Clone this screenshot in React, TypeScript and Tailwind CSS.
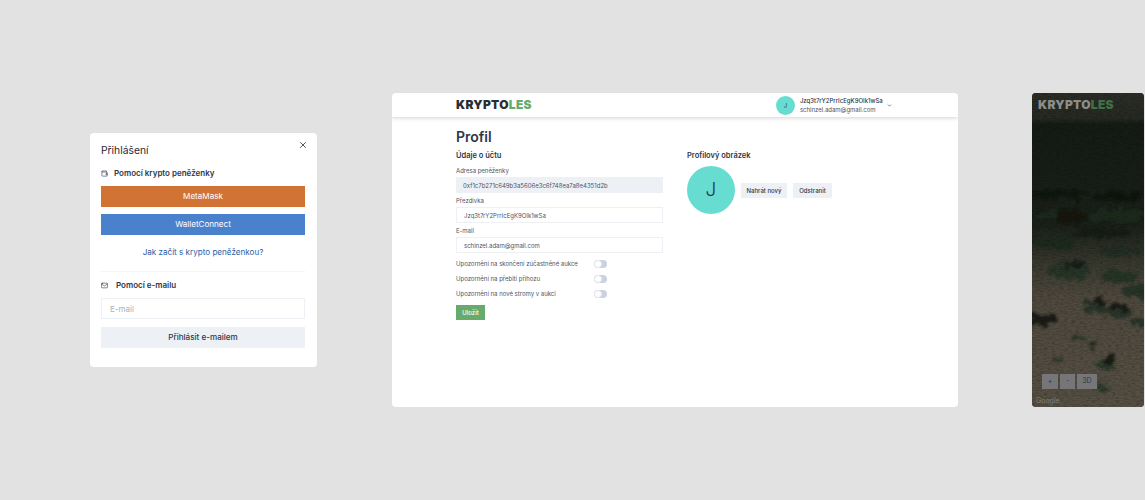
import React from 'react';
import { X, Mail, Wallet, ChevronDown } from 'lucide-react';

const font = { fontFamily: 'Inter, sans-serif' };

const Logo = ({ dark }: { dark?: boolean }) => (
  <div className={`text-[12px] leading-none font-black tracking-[0.025em] ${dark ? 'text-[#8b8d8b]' : 'text-[#2b2e30]'}`}>
    KRYPTO<span className={dark ? 'text-[#3f7048]' : 'text-[#66ab6b]'}>LES</span>
  </div>
);

const LoginCard = () => (
  <div className="relative mt-[133px] h-[234px] w-[227px] shrink-0 rounded bg-white px-[11px] pt-[10px]">
    <X className="absolute right-[9px] top-[7px] h-[10px] w-[10px] text-[#2d3748]" strokeWidth={2} />
    <div className="text-[10.3px] leading-[14px] text-[#1f2937]">Přihlášení</div>
    <div className="mt-[11px] flex items-center gap-[6px] text-[8px] leading-[11px] font-semibold text-[#2d3748]">
      <Wallet className="h-[7px] w-[7px]" strokeWidth={2} />
      Pomocí krypto peněženky
    </div>
    <button className="mt-[7px] block h-[21px] w-[204px] bg-[#d07335] text-[8.1px] text-white">MetaMask</button>
    <button className="mt-[7px] block h-[21px] w-[204px] bg-[#4a81cd] text-[8.1px] text-white">WalletConnect</button>
    <div className="mt-[12px] w-[204px] text-center text-[8.1px] leading-[11px] text-[#2b5ea7]">Jak začít s krypto peněženkou?</div>
    <div className="mt-[13px] h-px w-[204px] bg-[#f3f4f6]" />
    <div className="mt-[8px] flex items-center gap-[8px] text-[8px] leading-[11px] font-semibold text-[#2d3748]">
      <Mail className="h-[7px] w-[7px]" strokeWidth={2} />
      Pomocí e-mailu
    </div>
    <div className="mt-[7px] flex h-[21px] w-[204px] items-center border border-[#edf0f5] px-[8px] text-[8px] text-[#a9b2c0]">E-mail</div>
    <button className="mt-[8px] block h-[21px] w-[204px] bg-[#edf1f6] text-[8.1px] font-medium text-[#2d3748]">Přihlásit e-mailem</button>
  </div>
);

const Field = ({ label, value, filled }: { label: string; value: string; filled?: boolean }) => (
  <div>
    <div className="text-[6px] leading-[9px] text-[#4a5568]">{label}</div>
    <div className={`mt-[2px] flex h-[16px] w-[207px] items-center px-[7px] text-[6px] text-[#4a5568] ${filled ? 'bg-[#edf1f6]' : 'border border-[#edf0f5] bg-white'}`}>{value}</div>
  </div>
);

const Toggle = ({ label }: { label: string }) => (
  <div className="flex h-[15px] w-[207px] items-center text-[6px] text-[#4a5568]">
    <span className="w-[138px]">{label}</span>
    <span className="flex h-[8px] w-[13px] items-center rounded-full bg-[#cbd2de]">
      <span className="h-[8px] w-[8px] rounded-full border border-[#e5e8ee] bg-white" />
    </span>
  </div>
);

const ProfileCard = () => (
  <div className="ml-[75px] mt-[93px] h-[314px] w-[566px] shrink-0 overflow-hidden rounded bg-white">
    <div className="flex h-[24px] items-center pl-[64px] shadow-[0_1px_4px_rgba(0,0,0,0.18)]">
      <Logo />
      <div className="ml-[244px] flex items-center">
        <div className="flex h-[19px] w-[19px] items-center justify-center rounded-full bg-[#66ddd0] text-[6px] text-[#2d3748]">J</div>
        <div className="ml-[5px] w-[86px]">
          <div className="text-[6px] leading-[9px] font-medium text-[#2d3748]">Jzq3t7rY2PrrIcEgK9OIk1wSa</div>
          <div className="text-[6px] leading-[9px] text-[#4a5568]">schinzel.adam@gmail.com</div>
        </div>
        <ChevronDown className="ml-[1px] h-[5px] w-[5px] text-[#2d3748]" strokeWidth={3} />
      </div>
    </div>
    <div className="flex pl-[64px]">
      <div className="w-[231px] shrink-0">
        <h1 className="mt-[11px] text-[14px] leading-[18px] font-semibold text-[#2d3748]">Profil</h1>
        <div className="mt-[5px] text-[7.5px] leading-[10px] font-semibold text-[#2d3748]">Údaje o účtu</div>
        <div className="mt-[5px] flex flex-col gap-[3px]">
          <Field filled label="Adresa peněženky" value="0xf1c7b271c649b3a5606e3c6f748ea7a8e4351d2b" />
          <Field label="Přezdívka" value="Jzq3t7rY2PrrIcEgK9OIk1wSa" />
          <Field label="E-mail" value="schinzel.adam@gmail.com" />
        </div>
        <div className="mt-[3px]">
          <Toggle label="Upozornění na skončení zúčastněné aukce" />
          <Toggle label="Upozornění na přebití příhozu" />
          <Toggle label="Upozornění na nové stromy v aukci" />
        </div>
        <button className="mt-[4px] block h-[15px] w-[29px] bg-[#66ab6b] text-[6px] font-medium text-white">Uložit</button>
      </div>
      <div className="pt-[34px]">
        <div className="text-[7.5px] leading-[10px] font-semibold text-[#2d3748]">Profilový obrázek</div>
        <div className="mt-[5px] flex items-center">
          <div className="flex h-[48px] w-[48px] items-center justify-center rounded-full bg-[#66ddd0] text-[19px] font-light text-[#2d3748]">J</div>
          <button className="ml-[6px] h-[15px] w-[46px] bg-[#edf1f6] text-[6px] font-medium text-[#2d3748]">Nahrát nový</button>
          <button className="ml-[6px] h-[15px] w-[39px] bg-[#edf1f6] text-[6px] font-medium text-[#2d3748]">Odstranit</button>
        </div>
      </div>
    </div>
  </div>
);

// tree clumps on the satellite photo: x, y, rx, ry, colour
const clumps: [number, number, number, number, string][] = [
  [85, 122, 28, 6, '#1f2a1f'],
  [20, 122, 18, 4, '#1f2a1f'],
  [20, 150, 22, 6, '#1f2a1f'],
  [90, 158, 22, 5, '#222d21'],
  [28, 101, 28, 5, '#0e120e'],
  [88, 103, 26, 5, '#0e120e'],
  [38, 124, 14, 8, '#121510'],
  [70, 140, 30, 4, '#141a13'],
  [38, 178, 21, 8, '#283428'],
  [42, 171, 12, 3, '#171c15'],
  [86, 183, 19, 7, '#283428'],
  [105, 198, 14, 8, '#283428'],
  [64, 214, 13, 7, '#2a3629'],
  [67, 209, 8, 3, '#1a1d17'],
  [84, 219, 14, 7, '#2a3629'],
  [87, 214, 8, 4, '#1a1d17'],
  [11, 227, 14, 6, '#1c1f16'],
  [106, 230, 7, 5, '#2a3629'],
  [46, 244, 5, 3, '#2c3a2b'],
  [60, 252, 5, 3, '#2a2e24'],
  [75, 272, 9, 6, '#2c3a2b'],
  [78, 267, 5, 3, '#1a1d17'],
  [25, 267, 5, 3, '#383c30'],
  [70, 294, 6, 4, '#2c3a2b'],
];

const MapTexture = () => (
  <svg className="absolute inset-0 h-full w-full" viewBox="0 0 112 314" preserveAspectRatio="none">
    <defs>
      <linearGradient id="ground" x1="0" y1="0" x2="0" y2="1">
        <stop offset="0" stopColor="#2c2e26" />
        <stop offset="0.08" stopColor="#262a22" />
        <stop offset="0.1" stopColor="#151b15" />
        <stop offset="0.42" stopColor="#1a2119" />
        <stop offset="0.55" stopColor="#3a3a2f" />
        <stop offset="0.65" stopColor="#4f493e" />
        <stop offset="1" stopColor="#565044" />
      </linearGradient>
      <filter id="soft" x="-10%" y="-10%" width="120%" height="120%">
        <feTurbulence type="fractalNoise" baseFrequency="0.12" numOctaves="3" seed="7" result="n" />
        <feDisplacementMap in="SourceGraphic" in2="n" scale="14" xChannelSelector="R" yChannelSelector="G" />
        <feGaussianBlur stdDeviation="0.9" />
      </filter>
      <filter id="grain">
        <feTurbulence type="fractalNoise" baseFrequency="0.25 0.8" numOctaves="2" seed="4" />
        <feColorMatrix values="0 0 0 0 0  0 0 0 0 0  0 0 0 0 0  1.6 0 0 0 -0.6" />
      </filter>
    </defs>
    <rect width="112" height="314" fill="url(#ground)" />
    <g filter="url(#soft)">
      {clumps.map(([cx, cy, rx, ry, fill], i) => (
        <ellipse key={i} cx={cx} cy={cy} rx={rx} ry={ry} fill={fill} />
      ))}
    </g>
    <rect width="112" height="314" filter="url(#grain)" opacity="0.3" />
  </svg>
);

const MapCard = () => (
  <div className="relative ml-[74px] mt-[93px] h-[314px] w-[112px] shrink-0 overflow-hidden rounded bg-[#2a2d24]">
    <MapTexture />
    <div className="absolute left-[6px] top-[6px]"><Logo dark /></div>
    <div className="absolute bottom-[18px] left-[10px] flex gap-[2px] text-[7px] text-[#2d3748]">
      <div className="flex h-[15px] w-[16px] items-center justify-center bg-[#767679]">+</div>
      <div className="flex h-[15px] w-[15px] items-center justify-center bg-[#767679]">-</div>
      <div className="flex h-[15px] w-[20px] items-center justify-center bg-[#767679]">3D</div>
    </div>
    <div className="absolute bottom-[1px] left-[4px] text-[7px] text-[#807f78]">Google</div>
  </div>
);

export default function App() {
  return (
    <div className="flex h-[500px] w-[1145px] items-start overflow-hidden bg-[#e2e2e2] pl-[90px] antialiased" style={font}>
      <LoginCard />
      <ProfileCard />
      <MapCard />
    </div>
  );
}
